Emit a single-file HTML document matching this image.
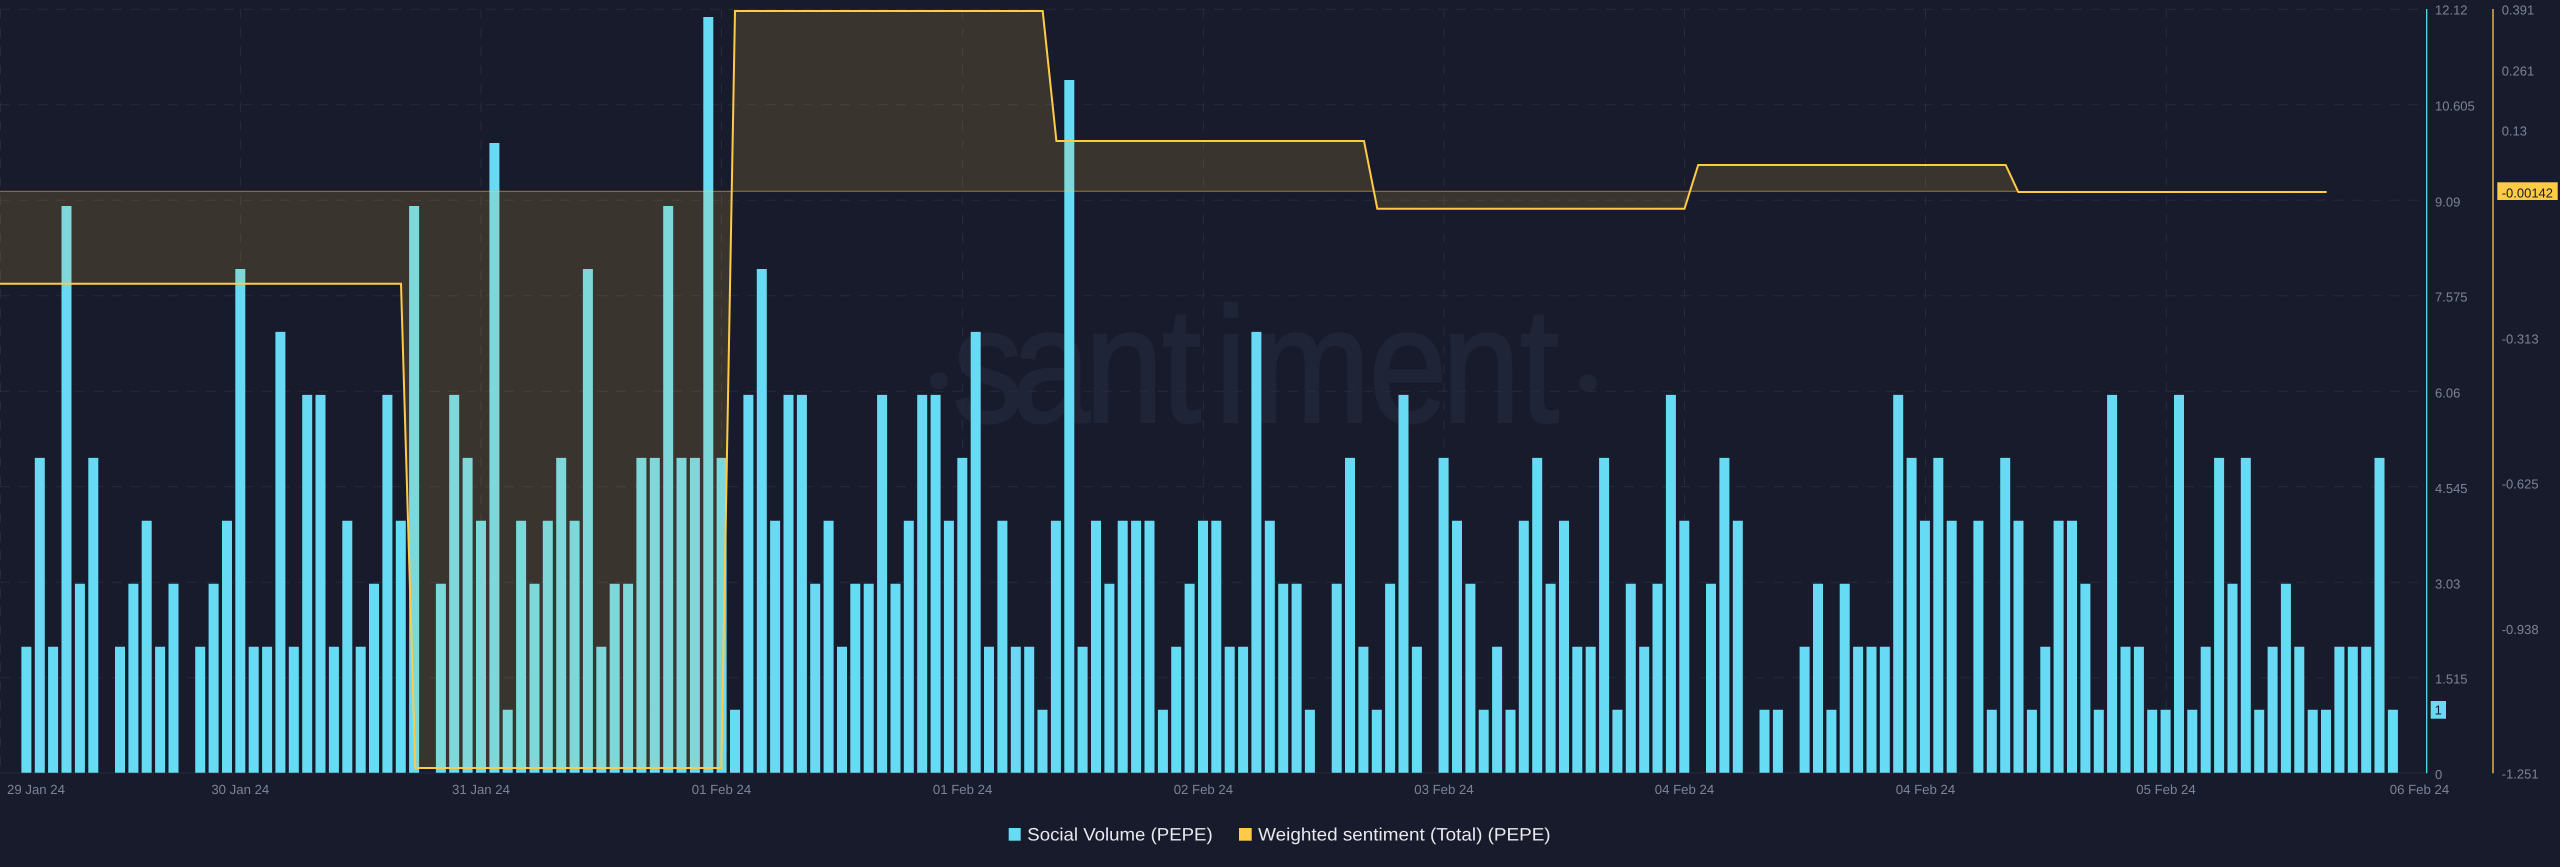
<!DOCTYPE html>
<html lang="en"><head><meta charset="utf-8"><title>Santiment chart</title>
<style>
html,body{margin:0;padding:0;background:#181b2b;width:2560px;height:867px;overflow:hidden}
svg{display:block}
text{font-family:"Liberation Sans",sans-serif;text-rendering:geometricPrecision}
.a{font-size:13px;fill:#7a8397}
.d{font-size:13.2px;fill:#7a8397;text-anchor:middle}
.l{font-size:18px;fill:#e8eaf0}
</style></head><body>
<svg xmlns="http://www.w3.org/2000/svg" width="2560" height="867" viewBox="0 0 2560 867">
<rect width="2560" height="867" fill="#181b2b"/>
<g fill="#1f2536">
<text transform="translate(0 421.7) scale(.858 1)" x="1110.7 1179.5 1264.6 1354.3 1416.1 1460.4 1595.6 1680.7 1771.6" y="0" font-size="164" style="fill:#1f2536" stroke="#1f2536" stroke-width="2.5">santiment</text>
<ellipse cx="939" cy="381" rx="9" ry="8.5"/><ellipse cx="1588" cy="383" rx="9" ry="8.5"/>
</g>
<g stroke="#272b3e" stroke-width="1" fill="none">
<path stroke-dasharray="10 8.67" d="M0 9.3H2420M0 104.7H2420M0 200.3H2420M0 295.7H2420M0 391.3H2420M0 486.7H2420M0 582.3H2420M0 677.7H2420"/>
<path stroke-dasharray="9.3 9.37" d="M.5 9.3V773M240.6 9.3V773M481 9.3V773M721.5 9.3V773M962.6 9.3V773M1203.4 9.3V773M1444 9.3V773M1684.5 9.3V773M1925.5 9.3V773M2166.3 9.3V773"/>
<path d="M0 773H2427" stroke="#23283a"/>
</g>
<path fill="#68dbf4" d="M21.4 646.8h10V772.7h-10zM34.8 457.9h10V772.7h-10zM48.1 646.8h10V772.7h-10zM61.5 206h10V772.7h-10zM74.9 583.8h10V772.7h-10zM88.3 457.9h10V772.7h-10zM115 646.8h10V772.7h-10zM128.4 583.8h10V772.7h-10zM141.7 520.8h10V772.7h-10zM155.1 646.8h10V772.7h-10zM168.5 583.8h10V772.7h-10zM195.2 646.8h10V772.7h-10zM208.6 583.8h10V772.7h-10zM222 520.8h10V772.7h-10zM235.3 269h10V772.7h-10zM248.7 646.8h10V772.7h-10zM262.1 646.8h10V772.7h-10zM275.4 331.9h10V772.7h-10zM288.8 646.8h10V772.7h-10zM302.2 394.9h10V772.7h-10zM315.5 394.9h10V772.7h-10zM328.9 646.8h10V772.7h-10zM342.3 520.8h10V772.7h-10zM355.7 646.8h10V772.7h-10zM369 583.8h10V772.7h-10zM382.4 394.9h10V772.7h-10zM395.8 520.8h10V772.7h-10zM409.1 206h10V772.7h-10zM435.9 583.8h10V772.7h-10zM449.2 394.9h10V772.7h-10zM462.6 457.9h10V772.7h-10zM476 520.8h10V772.7h-10zM489.4 143h10V772.7h-10zM502.7 709.7h10V772.7h-10zM516.1 520.8h10V772.7h-10zM529.5 583.8h10V772.7h-10zM542.8 520.8h10V772.7h-10zM556.2 457.9h10V772.7h-10zM569.6 520.8h10V772.7h-10zM582.9 269h10V772.7h-10zM596.3 646.8h10V772.7h-10zM609.7 583.8h10V772.7h-10zM623.1 583.8h10V772.7h-10zM636.4 457.9h10V772.7h-10zM649.8 457.9h10V772.7h-10zM663.2 206h10V772.7h-10zM676.5 457.9h10V772.7h-10zM689.9 457.9h10V772.7h-10zM703.3 17h10V772.7h-10zM716.6 457.9h10V772.7h-10zM730 709.7h10V772.7h-10zM743.4 394.9h10V772.7h-10zM756.8 269h10V772.7h-10zM770.1 520.8h10V772.7h-10zM783.5 394.9h10V772.7h-10zM796.9 394.9h10V772.7h-10zM810.2 583.8h10V772.7h-10zM823.6 520.8h10V772.7h-10zM837 646.8h10V772.7h-10zM850.3 583.8h10V772.7h-10zM863.7 583.8h10V772.7h-10zM877.1 394.9h10V772.7h-10zM890.5 583.8h10V772.7h-10zM903.8 520.8h10V772.7h-10zM917.2 394.9h10V772.7h-10zM930.6 394.9h10V772.7h-10zM943.9 520.8h10V772.7h-10zM957.3 457.9h10V772.7h-10zM970.7 331.9h10V772.7h-10zM984 646.8h10V772.7h-10zM997.4 520.8h10V772.7h-10zM1010.8 646.8h10V772.7h-10zM1024.2 646.8h10V772.7h-10zM1037.5 709.7h10V772.7h-10zM1050.9 520.8h10V772.7h-10zM1064.3 80h10V772.7h-10zM1077.6 646.8h10V772.7h-10zM1091 520.8h10V772.7h-10zM1104.4 583.8h10V772.7h-10zM1117.7 520.8h10V772.7h-10zM1131.1 520.8h10V772.7h-10zM1144.5 520.8h10V772.7h-10zM1157.9 709.7h10V772.7h-10zM1171.2 646.8h10V772.7h-10zM1184.6 583.8h10V772.7h-10zM1198 520.8h10V772.7h-10zM1211.3 520.8h10V772.7h-10zM1224.7 646.8h10V772.7h-10zM1238.1 646.8h10V772.7h-10zM1251.4 331.9h10V772.7h-10zM1264.8 520.8h10V772.7h-10zM1278.2 583.8h10V772.7h-10zM1291.6 583.8h10V772.7h-10zM1304.9 709.7h10V772.7h-10zM1331.7 583.8h10V772.7h-10zM1345 457.9h10V772.7h-10zM1358.4 646.8h10V772.7h-10zM1371.8 709.7h10V772.7h-10zM1385.1 583.8h10V772.7h-10zM1398.5 394.9h10V772.7h-10zM1411.9 646.8h10V772.7h-10zM1438.6 457.9h10V772.7h-10zM1452 520.8h10V772.7h-10zM1465.4 583.8h10V772.7h-10zM1478.7 709.7h10V772.7h-10zM1492.1 646.8h10V772.7h-10zM1505.5 709.7h10V772.7h-10zM1518.8 520.8h10V772.7h-10zM1532.2 457.9h10V772.7h-10zM1545.6 583.8h10V772.7h-10zM1559 520.8h10V772.7h-10zM1572.3 646.8h10V772.7h-10zM1585.7 646.8h10V772.7h-10zM1599.1 457.9h10V772.7h-10zM1612.4 709.7h10V772.7h-10zM1625.8 583.8h10V772.7h-10zM1639.2 646.8h10V772.7h-10zM1652.5 583.8h10V772.7h-10zM1665.9 394.9h10V772.7h-10zM1679.3 520.8h10V772.7h-10zM1706 583.8h10V772.7h-10zM1719.4 457.9h10V772.7h-10zM1732.8 520.8h10V772.7h-10zM1759.5 709.7h10V772.7h-10zM1772.9 709.7h10V772.7h-10zM1799.6 646.8h10V772.7h-10zM1813 583.8h10V772.7h-10zM1826.4 709.7h10V772.7h-10zM1839.7 583.8h10V772.7h-10zM1853.1 646.8h10V772.7h-10zM1866.5 646.8h10V772.7h-10zM1879.8 646.8h10V772.7h-10zM1893.2 394.9h10V772.7h-10zM1906.6 457.9h10V772.7h-10zM1919.9 520.8h10V772.7h-10zM1933.3 457.9h10V772.7h-10zM1946.7 520.8h10V772.7h-10zM1973.4 520.8h10V772.7h-10zM1986.8 709.7h10V772.7h-10zM2000.2 457.9h10V772.7h-10zM2013.5 520.8h10V772.7h-10zM2026.9 709.7h10V772.7h-10zM2040.3 646.8h10V772.7h-10zM2053.6 520.8h10V772.7h-10zM2067 520.8h10V772.7h-10zM2080.4 583.8h10V772.7h-10zM2093.8 709.7h10V772.7h-10zM2107.1 394.9h10V772.7h-10zM2120.5 646.8h10V772.7h-10zM2133.9 646.8h10V772.7h-10zM2147.2 709.7h10V772.7h-10zM2160.6 709.7h10V772.7h-10zM2174 394.9h10V772.7h-10zM2187.3 709.7h10V772.7h-10zM2200.7 646.8h10V772.7h-10zM2214.1 457.9h10V772.7h-10zM2227.5 583.8h10V772.7h-10zM2240.8 457.9h10V772.7h-10zM2254.2 709.7h10V772.7h-10zM2267.6 646.8h10V772.7h-10zM2280.9 583.8h10V772.7h-10zM2294.3 646.8h10V772.7h-10zM2307.7 709.7h10V772.7h-10zM2321 709.7h10V772.7h-10zM2334.4 646.8h10V772.7h-10zM2347.8 646.8h10V772.7h-10zM2361.2 646.8h10V772.7h-10zM2374.5 457.9h10V772.7h-10zM2387.9 709.7h10V772.7h-10z"/>
<path fill="#ffcb47" fill-opacity=".15" d="M0 191.3V283.7H401L415.3 768H721.3L735 11H1042.7L1056.4 141H1364L1377.3 208.7H1684.5L1698.2 165H2005.7L2018.3 192H2326.7V191.3Z"/>
<path stroke="#ffcb47" stroke-opacity=".45" stroke-width="1.2" fill="none" d="M0 191.3H2018"/>
<path stroke="#ffcb47" stroke-width="2" fill="none" stroke-linejoin="miter" d="M0 283.7H401L415.3 768H721.3L735 11H1042.7L1056.4 141H1364L1377.3 208.7H1684.5L1698.2 165H2005.7L2018.3 192H2326.7"/>
<path stroke="#5fd5ef" stroke-width="1.3" d="M2426.7 9V773.3"/>
<path stroke="#ffcb47" stroke-width="1.3" d="M2493 9V773.3"/>
<g class="ax">
<text class="a" x="2435" y="14.7">12.12</text>
<text class="a" x="2435" y="110.7">10.605</text>
<text class="a" x="2435" y="206.4">9.09</text>
<text class="a" x="2435" y="301.7">7.575</text>
<text class="a" x="2435" y="397.4">6.06</text>
<text class="a" x="2435" y="493">4.545</text>
<text class="a" x="2435" y="588.4">3.03</text>
<text class="a" x="2435" y="683.7">1.515</text>
<text class="a" x="2435" y="779">0</text>
<text class="a" x="2501.7" y="14.7">0.391</text>
<text class="a" x="2501.7" y="75.4">0.261</text>
<text class="a" x="2501.7" y="135.7">0.13</text>
<text class="a" x="2501.7" y="343.7">-0.313</text>
<text class="a" x="2501.7" y="488.7">-0.625</text>
<text class="a" x="2501.7" y="634">-0.938</text>
<text class="a" x="2501.7" y="778.7">-1.251</text>
</g>
<rect x="2497.3" y="182.3" width="60.4" height="17.7" fill="#ffcb47"/>
<text x="2501.7" y="197.4" font-size="13" style="fill:#181b2b">-0.00142</text>
<rect x="2430.7" y="701" width="15.3" height="17.7" fill="#68dbf4"/>
<text x="2438.3" y="714.7" font-size="13" text-anchor="middle" style="fill:#181b2b">1</text>
<text class="d" x="36" y="794">29 Jan 24</text>
<text class="d" x="240.3" y="794">30 Jan 24</text>
<text class="d" x="481" y="794">31 Jan 24</text>
<text class="d" x="721.5" y="794">01 Feb 24</text>
<text class="d" x="962.6" y="794">01 Feb 24</text>
<text class="d" x="1203.4" y="794">02 Feb 24</text>
<text class="d" x="1444" y="794">03 Feb 24</text>
<text class="d" x="1684.5" y="794">04 Feb 24</text>
<text class="d" x="1925.5" y="794">04 Feb 24</text>
<text class="d" x="2166" y="794">05 Feb 24</text>
<text class="d" x="2419.5" y="794">06 Feb 24</text>
<rect x="1008.7" y="828" width="12" height="12.7" fill="#68dbf4"/>
<text class="l" x="1027.3" y="840.3" textLength="185.4" lengthAdjust="spacingAndGlyphs">Social Volume (PEPE)</text>
<rect x="1239" y="828" width="12.7" height="12.7" fill="#ffcb47"/>
<text class="l" x="1258.2" y="840.3" textLength="292.4" lengthAdjust="spacingAndGlyphs">Weighted sentiment (Total) (PEPE)</text>
</svg>
</body></html>
